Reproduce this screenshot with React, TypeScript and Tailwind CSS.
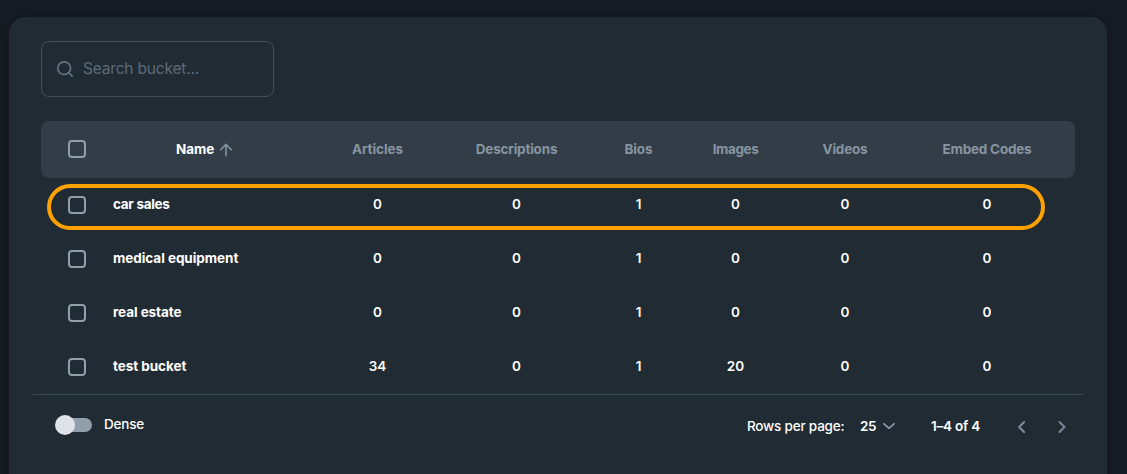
import type { ReactNode } from 'react';

const columns = ['Articles', 'Descriptions', 'Bios', 'Images', 'Videos', 'Embed Codes'];
const headerTracking = ['tracking-[-0.05px]', 'tracking-[-0.2px]', 'tracking-[-0.1px]', 'tracking-[-0.4px]', 'tracking-[-0.2px]', 'tracking-[-0.2px]'];

const rows = [
  { name: 'car sales', tracking: 'tracking-[-0.3px]', values: [0, 0, 1, 0, 0, 0] },
  { name: 'medical equipment', tracking: 'tracking-[-0.05px]', values: [0, 0, 1, 0, 0, 0] },
  { name: 'real estate', tracking: 'tracking-[-0.08px]', values: [0, 0, 1, 0, 0, 0] },
  { name: 'test bucket', tracking: 'tracking-[-0.06px]', values: [34, 0, 1, 20, 0, 0] },
];

const grid = 'grid grid-cols-[72px_184px_161px_117px_127px_67px_152px_154px] items-center';

function Checkbox() {
  return (
    <button
      role="checkbox"
      aria-checked={false}
      className="ml-[27px] block size-[18px] rounded-[4px] border-2 border-[#919eab]"
    />
  );
}

function Icon({ className, width = 2, children }: { className: string; width?: number; children: ReactNode }) {
  return (
    <svg viewBox="0 0 24 24" fill="none" stroke="currentColor" strokeWidth={width} strokeLinecap="round" strokeLinejoin="round" className={className}>
      {children}
    </svg>
  );
}

export default function App() {
  return (
    <main className="h-[474px] overflow-hidden bg-[#161c24] px-[9px] pt-[17px] font-['Inter',sans-serif] text-white">
      <section className="h-[500px] w-[1098px] rounded-[16px] bg-[#212b34] pt-6 shadow-[0_0_8px_rgba(16,18,28,0.7)]">
        <label className="ml-8 flex h-14 w-[233px] items-center rounded-lg border border-[#42505a] pl-[13px] text-[#637381]">
          <Icon className="size-5" width={2.1}>
            <circle cx="11" cy="11" r="7.7" />
            <path d="m17 17 3.5 3.5" />
          </Icon>
          <input
            placeholder="Search bucket..."
            className="ml-[8px] w-[170px] bg-transparent text-[15.5px] tracking-[-0.18px] outline-none placeholder:text-[#5b6b78]"
          />
        </label>

        <div className="relative mx-8 mt-6">
          <div className={`${grid} h-[57px] rounded-lg bg-[#333d47] pb-px text-[13.5px] font-bold text-[#8795a2]`}>
            <Checkbox />
            <div className="flex items-center pt-px pl-[63px] font-bold text-white">
              <span className="tracking-[-0.1px]">Name</span>
              <svg viewBox="0 0 14 14" className="ml-[5px] size-[14px]" fill="none" stroke="#84929f" strokeWidth="1.6" strokeLinecap="round" strokeLinejoin="round">
                <path d="M7 12.8V1.8M1.7 6.7 7 1.4l5.3 5.3" />
              </svg>
            </div>
            {columns.map((label, i) => (
              <div key={label} className={`pt-px text-center whitespace-nowrap ${i === 5 ? 'pr-[22px]' : ''} ${headerTracking[i]}`}>
                {label}
              </div>
            ))}
          </div>

          {rows.map((row) => (
            <div key={row.name} className={`${grid} h-[54px] text-[13.5px]`}>
              <Checkbox />
              <div className={`pb-[2px] font-bold whitespace-nowrap ${row.tracking}`}>{row.name}</div>
              {row.values.map((value, i) => (
                <div key={columns[i]} className={`pb-[2px] text-center font-semibold ${i === 5 ? 'pr-[22px]' : ''}`}>
                  {value}
                </div>
              ))}
            </div>
          ))}

          <div className="pointer-events-none absolute top-[63px] left-[6px] h-[46px] w-[998px] rounded-[23px] border-4 border-[#ffa200]" />
        </div>

        <footer className="mx-6 flex h-[61px] items-center border-t border-[#3a4a53] text-[13.5px] font-medium">
          <button role="switch" aria-checked={false} className="ml-[22px] flex h-5 w-[37px] items-center">
            <span className="z-10 size-5 shrink-0 rounded-full bg-[#dfe3e8]" />
            <span className="-ml-[17px] h-[14px] w-[34px] shrink-0 rounded-full bg-[#919eab]" />
          </button>
          <span className="ml-3 pb-px tracking-[-0.2px]">Dense</span>
          <div className="ml-auto flex items-center pt-[3px] whitespace-nowrap">
            <span className="w-[113px] tracking-[-0.2px]">Rows per page:</span>
            <span className="w-[20px] pb-px font-semibold tracking-[-0.4px]">25</span>
            <Icon className="mb-px ml-[2px] size-[14px] text-[#919eab]" width={2.6}>
              <path d="m3 8 9 8 9-8" />
            </Icon>
            <span className="ml-[35px] w-[81px] font-semibold tracking-[-0.2px]">1–4 of 4</span>
            <Icon className="size-5 text-[#7b8996]" width={2.5}>
              <path d="m14.5 6-6 6 6 6" />
            </Icon>
            <Icon className="mr-[11px] ml-5 size-5 text-[#7b8996]" width={2.5}>
              <path d="m9 6 6 6-6 6" />
            </Icon>
          </div>
        </footer>
      </section>
    </main>
  );
}
